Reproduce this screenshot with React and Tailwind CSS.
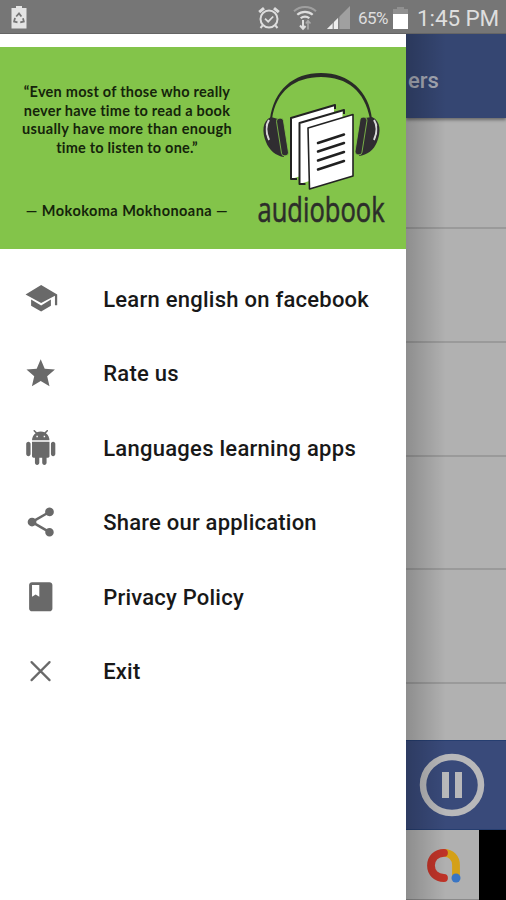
const menuItems = [
  {
    title: 'Learn english on facebook', spacing: 'tracking-[0.25px]',
    icon: <path d="M1.7 9L12.1 2.7 22.8 9v7.2h-1.5V9.8L12.1 14.7zM5.4 12.3L12.1 16.3 18.6 12.3V16.5L12.1 20.4 5.400 16.500z" />,
  },
  {
    title: 'Rate us', spacing: 'tracking-[0.25px]',
    icon: <path d="M12 17.27L18.18 21l-1.64-7.03L22 9.24l-7.19-.61L12 2 9.19 8.63 2 9.24l5.46 4.73L5.82 21z" transform="translate(.4 .9) scale(.95)" />,
  },
  {
    title: 'Languages learning apps', spacing: 'tracking-[0.27px]',
    icon: <path d="M6 18c0 .55.45 1 1 1h1v3.5c0 .83.67 1.5 1.5 1.5s1.5-.67 1.5-1.5V19h2v3.5c0 .83.67 1.5 1.5 1.5s1.5-.67 1.5-1.5V19h1c.55 0 1-.45 1-1V8H6v10zM3.5 8C2.67 8 2 8.67 2 9.5v7c0 .83.67 1.5 1.5 1.5S5 17.33 5 16.5v-7C5 8.67 4.33 8 3.5 8zm17 0c-.83 0-1.5.67-1.5 1.5v7c0 .83.67 1.5 1.5 1.5s1.5-.67 1.5-1.5v-7c0-.83-.67-1.5-1.5-1.5zm-4.97-5.84l1.3-1.3c.2-.2.2-.51 0-.71-.2-.2-.51-.2-.71 0l-1.48 1.48C13.85 1.23 12.95 1 12 1c-.96 0-1.86.23-2.66.63L7.85.15c-.2-.2-.51-.2-.71 0-.2.2-.2.51 0 .71l1.31 1.31C6.97 3.26 6 5.01 6 7h12c0-1.99-.97-3.75-2.47-4.84zM10 5H9V4h1v1zm5 0h-1V4h1v1z" transform="translate(.2 0) scale(.97)" />,
  },
  {
    title: 'Share our application', spacing: 'tracking-[0.22px]',
    icon: <path d="M18 16.08c-.76 0-1.44.3-1.96.77L8.91 12.7c.05-.23.09-.46.09-.7s-.04-.47-.09-.7l7.05-4.11c.54.5 1.25.81 2.04.81 1.66 0 3-1.34 3-3s-1.34-3-3-3-3 1.34-3 3c0 .24.04.47.09.7L8.04 9.81C7.5 9.31 6.79 9 6 9c-1.66 0-3 1.34-3 3s1.34 3 3 3c.79 0 1.5-.31 2.04-.81l7.12 4.16c-.05.21-.08.43-.08.65 0 1.61 1.31 2.92 2.92 2.92 1.61 0 2.92-1.31 2.92-2.92s-1.31-2.92-2.92-2.92z" transform="translate(.2 .4) scale(.97)" />,
  },
  {
    title: 'Privacy Policy', spacing: 'tracking-[0.22px]',
    icon: <path d="M18 2H6c-1.1 0-2 .9-2 2v16c0 1.1.9 2 2 2h12c1.1 0 2-.9 2-2V4c0-1.1-.9-2-2-2zM6 4h5v8l-2.5-1.5L6 12V4z" transform="translate(.2 .2) scale(.97)" />,
  },
  {
    title: 'Exit', spacing: 'tracking-[0.2px]',
    icon: <path d="M5.7 6.1l12 12M17.7 6.1l-12 12" stroke="currentColor" strokeWidth="1.5" strokeLinecap="round" />,
  },
]

const quote = [
  { text: '“Even most of those who really', spacing: 'tracking-[0.25px]' },
  { text: 'never have time to read a book', spacing: 'tracking-[0.25px]' },
  { text: 'usually have more than enough', spacing: 'tracking-[0.35px]' },
  { text: 'time to listen to one.”', spacing: 'tracking-[0.2px]' },
]

function StatusBar() {
  return (
    <header className="flex h-[34px] shrink-0 items-center border-b border-[#656565] bg-[#767676] pl-[11px] text-[#dedede]">
      <svg className="mt-[1px]" width="16" height="24" viewBox="0 0 16 24">
        <path d="M5 1h6v2h4.5v20.5H.5V3H5z" fill="#e4e4e4" />
        <g fill="none" stroke="#777" strokeWidth="1.8">
          <path d="M5.2 11.5L8 8.5l2.4 3" />
          <path d="M12 13.2l.8 3.3-3.6.8" />
          <path d="M6.5 17.3l-3.4-.8.9-3.6" />
        </g>
      </svg>
      {/* alarm */}
      <svg className="mt-[2px] ml-[231px]" width="22" height="24" viewBox="0 0 22 24" fill="none" stroke="currentColor">
        <circle cx="11" cy="13" r="8.5" strokeWidth="2" />
        <path d="M1.2 6.2L6 2.2M20.8 6.2L16 2.2" strokeWidth="3" />
        <path d="M4.7 19.3L2.5 22M17.3 19.3l2.2 2.7" strokeWidth="2" />
        <path d="M7 12.7l3.2 3 5-5.2" strokeWidth="1.8" />
      </svg>
      {/* wifi with traffic arrows */}
      <svg className="mt-[2px] ml-[13px]" width="24" height="26" viewBox="0 0 24 26" fill="none" stroke="currentColor">
        <path d="M1 6.3C7.3.7 16.7.7 23 6.3" strokeWidth="2" opacity=".4" />
        <path d="M4.3 9.8c4.4-4 11-4 15.4 0" strokeWidth="2.2" />
        <path d="M7.7 13.3c2.4-2.2 6.2-2.2 8.6 0" strokeWidth="2.2" />
        <path d="M10 15v9M7 20.5l3 3.3 2.5-2.8" strokeWidth="2" />
        <path d="M15 24.5V16M12.8 18.5l2.2-2.7 2.5 2.7" strokeWidth="1.6" opacity=".5" />
      </svg>
      {/* signal */}
      <svg className="mt-[2px] ml-[10px]" width="23" height="23" viewBox="0 0 23 23">
        <path d="M0 23L23 0v23z" fill="#a0a0a0" />
        <path d="M0 23L11 12v11z" fill="#ededed" />
        <path d="M6.2 15v8M11.8 10v13" stroke="#777" strokeWidth="1" />
      </svg>
      <span className="mt-[4px] ml-[8px] w-[32px] text-[17px] tracking-[-0.5px] whitespace-nowrap">65%</span>
      <svg className="mt-[2px] ml-[3px]" width="15" height="23" viewBox="0 0 15 23">
        <path d="M4 1h7v2h4v5H0V3h4z" fill="#909090" />
        <path d="M0 8h15v15H0z" fill="#fff" />
      </svg>
      <span className="mt-[4px] ml-[9px] text-[22.5px] tracking-[-0.1px] whitespace-nowrap">1:45 PM</span>
    </header>
  )
}

function AudiobookLogo() {
  return (
    <svg width="140" height="183" viewBox="254 66 140 183" className="overflow-visible">
      {/* headband */}
      <path d="M270 119C274 90 293 73 321 73s48 18 51 46h-2c-5-28-23-42-49-42s-45 14-49 42z" fill="#292b27" />
      {/* left cup */}
      <path d="M271 117c-9 4-9 15-5 25 3 8 10 14 18 15l-6-38z" fill="#302d31" />
      <path d="M269 120c-4 6-3 13 0 20" fill="none" stroke="#d8d8d8" strokeWidth="2" />
      <path d="M265 126c-1 8 2 16 6 21" fill="none" stroke="#302d31" strokeWidth="1.5" />
      <rect x="-3.5" y="-19" width="7" height="38" rx="3" transform="translate(282.5 137) rotate(-9)" fill="#302d31" stroke="#83c44a" strokeWidth=".8" />
      {/* right cup */}
      <path d="M372 117c9 4 9 15 5 25-3 8-10 13-18 14l6-38z" fill="#302d31" />
      <path d="M374 120c4 6 3 13 0 20" fill="none" stroke="#d8d8d8" strokeWidth="2" />
      <path d="M378 126c1 8-2 16-6 21" fill="none" stroke="#302d31" strokeWidth="1.5" />
      <rect x="-3.5" y="-19" width="7" height="38" rx="3" transform="translate(361 136) rotate(9)" fill="#302d31" stroke="#83c44a" strokeWidth=".8" />
      {/* pages */}
      <g fill="#fff">
        <path d="M291 118v61l43-13v-61z" />
        <path d="M299.5 123v61l43-13v-61z" />
        <path d="M308 128l1.5 61 43.5-13v-61.5z" />
      </g>
      <g fill="none" stroke="#222" strokeWidth="2" strokeLinejoin="round">
        <path d="M335 109v-4l-44 13v61h6" />
        <path d="M344 114v-4l-44.5 13v61h6" />
        <path d="M353 114.5L308 128l1.5 61 43.5-13z" strokeWidth="1.6" />
      </g>
      <path d="M318 143l26-8.5M318 151.5l26-8.5M318 160.5l26-8.5M318 169.5l26-8.5" stroke="#202020" strokeWidth="2.5" strokeLinecap="round" />
      <g transform="translate(257.5 222) scale(.73 1)">
        <text fill="#2c2d2a" stroke="#2c2d2a" strokeWidth=".6" fontFamily="Open Sans, sans-serif" fontSize="35">audiobook</text>
      </g>
    </svg>
  )
}

function Banner() {
  return (
    <div className="mt-[13px] flex h-[202px] bg-[#83c44a]">
      <div className="w-[254px] pt-[36px] text-center font-['Lato',sans-serif] text-[14.5px] leading-[18.5px] font-bold text-[#15240b]">
        {quote.map(line => (
          <div key={line.text} className={`whitespace-nowrap ${line.spacing}`}>{line.text}</div>
        ))}
        <div className="mt-[45px] text-[14.5px] tracking-[0.45px]">— Mokokoma Mokhonoana —</div>
      </div>
      <div className="pt-[19px]">
        <AudiobookLogo />
      </div>
    </div>
  )
}

function Drawer() {
  return (
    <aside className="w-[406px] shrink-0 bg-white">
      <Banner />
      <nav className="pt-[12.5px]">
        {menuItems.map(item => (
          <div key={item.title} className="flex h-[74.5px] items-center pl-[22.5px]">
            <svg className="text-[#696969]" width="36" height="36" viewBox="0 0 24 24" fill="currentColor">{item.icon}</svg>
            <span className={`mt-[1px] ml-[44.7px] text-[22px] font-medium whitespace-nowrap text-[#181818] ${item.spacing}`}>{item.title}</span>
          </div>
        ))}
      </nav>
    </aside>
  )
}

function Player() {
  return (
    <main className="relative flex flex-1 flex-col overflow-hidden bg-[#b1b1b1]">
      <div className="flex h-[84px] shrink-0 items-center bg-[#354672] pt-[8px] pl-[2px] text-[22px] font-medium text-[#a5a9b5] shadow-[0_2px_3px_rgba(0,0,0,0.4)]">ers</div>
      <div className="h-[111px] shrink-0 border-b-2 border-[#9a9a9a]" />
      {[1, 2, 3, 4].map(n => <div key={n} className="h-[113.8px] shrink-0 border-b-2 border-[#9a9a9a]" />)}
      <div className="flex-1" />
      <div className="flex h-[90px] shrink-0 items-center border-y border-[#263e70] bg-[#394a7a] pl-[13px]">
        <svg width="66" height="66" viewBox="0 0 66 66">
          <ellipse cx="33" cy="33" rx="29" ry="28" fill="none" stroke="#b8b8ba" strokeWidth="6.5" />
          <path d="M23 20h7v26h-7zM36 20h7v26h-7z" fill="#b8b8ba" />
        </svg>
      </div>
      <div className="flex h-[70px] shrink-0 bg-black">
        <div className="w-[73px] border-b border-[#8a8a8a] bg-[#b0b0b0] pt-[18px] pl-[20px]">
          <svg width="36" height="36" viewBox="0 0 36 36" fill="none" strokeWidth="7.8" strokeLinecap="round">
            <path d="M18 4.8C25 4.8 30 10 30 17v11" stroke="#d4a017" />
            <path d="M18 4.8C10 4.8 5 10.5 5 17.5S10 30 18 30" stroke="#bf3328" />
            <circle cx="30" cy="30" r="4.5" fill="#3975c4" />
          </svg>
        </div>
      </div>
      <div className="pointer-events-none absolute inset-y-0 left-0 w-[40px] bg-gradient-to-r from-black/20 to-transparent" />
    </main>
  )
}

export default function App() {
  return (
    <div className="flex h-[900px] w-[506px] flex-col overflow-hidden font-['Roboto',sans-serif]">
      <StatusBar />
      <div className="flex min-h-0 flex-1">
        <Drawer />
        <Player />
      </div>
    </div>
  )
}
